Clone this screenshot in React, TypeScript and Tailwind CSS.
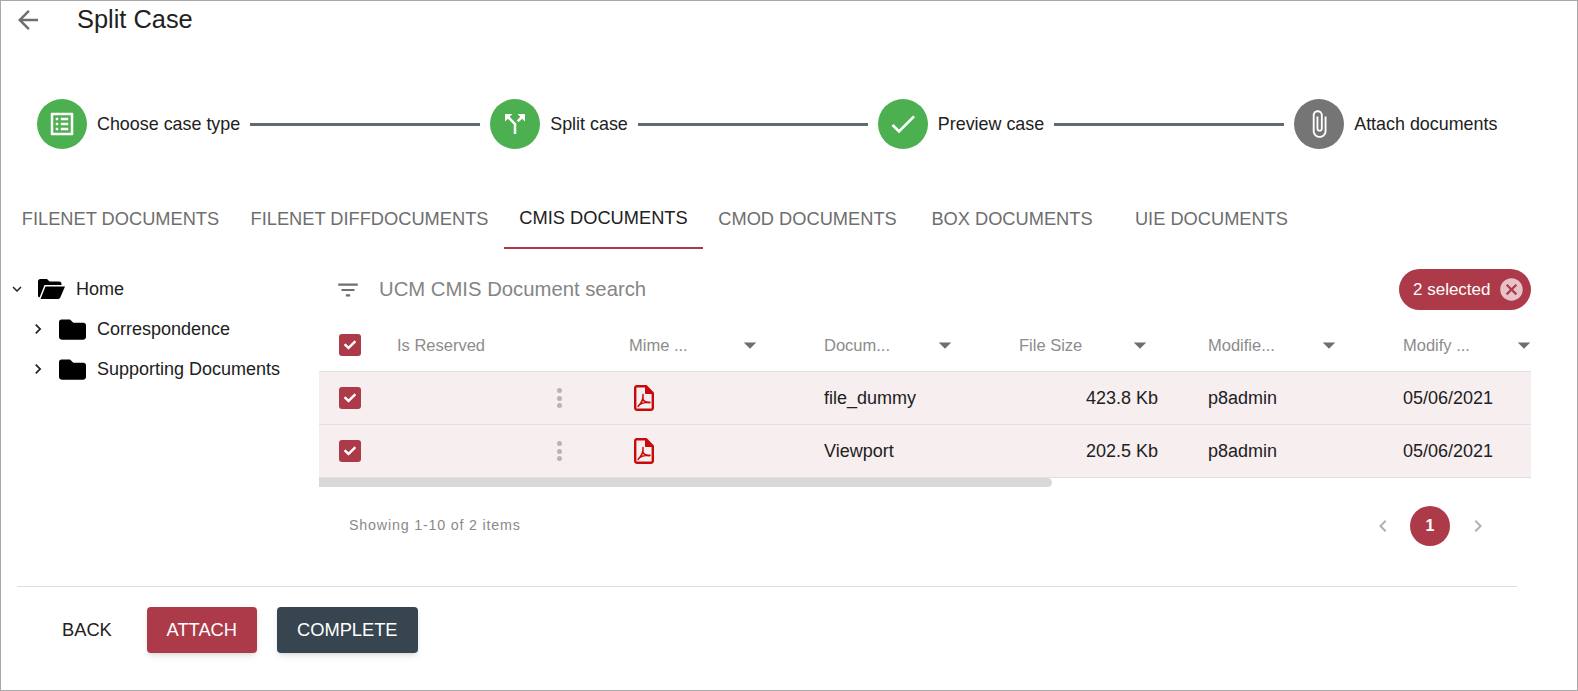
import React from 'react';
import { MdArrowBack, MdOutlineListAlt, MdCallSplit, MdCheck, MdAttachFile, MdFilterList, MdCancel, MdExpandMore, MdChevronRight, MdChevronLeft, MdArrowDropDown } from 'react-icons/md';
import { FaFolder, FaCheck } from 'react-icons/fa';

const steps = [
  { label: 'Choose case type', icon: <MdOutlineListAlt className="w-[30px] h-[30px]" />, color: 'bg-[#4caf50]' },
  { label: 'Split case', icon: <MdCallSplit className="w-[30px] h-[30px]" />, color: 'bg-[#4caf50]' },
  { label: 'Preview case', icon: <MdCheck className="w-[32px] h-[32px]" />, color: 'bg-[#4caf50]' },
  { label: 'Attach documents', icon: <MdAttachFile className="w-[30px] h-[30px]" />, color: 'bg-[#757575]' },
];

const tabs = [
  { label: 'FILENET DOCUMENTS', cls: 'w-[229px]' },
  { label: 'FILENET DIFFDOCUMENTS', cls: 'w-[269px]' },
  { label: 'CMIS DOCUMENTS', cls: 'w-[199px] text-[#212121] border-b-2 border-[#ad3a48]' },
  { label: 'CMOD DOCUMENTS', cls: 'w-[209px]' },
  { label: 'BOX DOCUMENTS', cls: 'w-[200px]' },
  { label: 'UIE DOCUMENTS', cls: 'w-[199px]' },
];

const columns = [
  { label: 'Mime ...', cls: 'w-[195px]' },
  { label: 'Docum...', cls: 'w-[195px]' },
  { label: 'File Size', cls: 'w-[189px]' },
  { label: 'Modifie...', cls: 'w-[195px]' },
  { label: 'Modify ...', cls: 'w-[128px]' },
];

const rows = [
  { name: 'file_dummy', size: '423.8 Kb' },
  { name: 'Viewport', size: '202.5 Kb' },
];

function Check() {
  return (
    <span className="w-[22px] h-[22px] rounded-[3px] bg-[#ad3a48] flex items-center justify-center text-white shrink-0">
      <FaCheck className="w-[12px] h-[12px]" />
    </span>
  );
}

function PdfIcon() {
  return (
    <svg viewBox="0 0 20 26" className="ml-[65px] w-[20px] h-[26px] shrink-0" fill="none" stroke="#c80a0a">
      <path d="M2.5 1.2H12L18.8 8V23a1.8 1.8 0 0 1-1.8 1.8H3A1.8 1.8 0 0 1 1.2 23V3A1.8 1.8 0 0 1 2.5 1.2Z" strokeWidth="2.4" strokeLinejoin="round" />
      <path d="M11.5 1.5V8.5H18.5L11.5 1.5Z" fill="#c80a0a" strokeWidth="1" />
      <path d="M9 9.5C9.5 13 7.5 18 4 21.5M9 14.5C10.5 17 13 17.8 16 17.6M4.5 20.5C7 18 11.5 17 16 17.2" strokeWidth="1.5" strokeLinecap="round" />
    </svg>
  );
}

export default function App() {
  return (
    <div className="h-[691px] w-[1578px] border border-[#a9a9a9] bg-white overflow-hidden font-['Liberation_Sans',sans-serif] text-[#212121] text-[18px]">
      {/* title */}
      <div className="flex items-center h-[38px] pl-[12px]">
        <MdArrowBack className="w-[30px] h-[30px] text-[#6f6f6f]" />
        <h1 className="ml-[34px] text-[25.4px] leading-none">Split Case</h1>
      </div>

      {/* stepper */}
      <div className="flex items-center mt-[60px] pl-[36px] text-[17.9px]">
        {steps.map((s, i) => (
          <React.Fragment key={s.label}>
            <span className={`w-[50px] h-[50px] rounded-full ${s.color} text-white flex items-center justify-center shrink-0`}>{s.icon}</span>
            <span className="ml-[10px] whitespace-nowrap">{s.label}</span>
            {i < steps.length - 1 && <span className="w-[230px] h-[3px] mx-[10px] bg-[#5f6b70]" />}
          </React.Fragment>
        ))}
      </div>

      {/* tabs */}
      <div className="flex mt-[50px] pl-[5px] h-[50px]">
        {tabs.map(t => (
          <div key={t.label} className={`${t.cls} flex items-center justify-center pb-[10px] text-[#6e6e6e] text-[18.25px] whitespace-nowrap`}>{t.label}</div>
        ))}
      </div>

      <div className="flex mt-[20px]">
        {/* tree */}
        <div className="w-[318px] shrink-0">
          <div className="flex items-center h-[40px]">
            <MdExpandMore className="ml-[7px] w-[18px] h-[18px]" />
            <svg viewBox="0 0 27 20" className="ml-[12px] w-[27px] h-[20px] shrink-0" fill="#000">
              <path d="M0 2.5A2.5 2.5 0 0 1 2.5 0H9l2.5 2.5H21A2.5 2.5 0 0 1 23.5 5V6H6.5L1.5 18.5 0 17.5Z" />
              <path d="M7.5 7.5H27L22.5 18a3 3 0 0 1-2.5 2H2.5Z" />
            </svg>
            <span className="ml-[11px]">Home</span>
          </div>
          <div className="flex items-center h-[40px]">
            <MdChevronRight className="ml-[27px] w-[20px] h-[20px]" />
            <FaFolder className="ml-[11px] w-[27px] h-[27px] text-black" />
            <span className="ml-[11px]">Correspondence</span>
          </div>
          <div className="flex items-center h-[40px]">
            <MdChevronRight className="ml-[27px] w-[20px] h-[20px]" />
            <FaFolder className="ml-[11px] w-[27px] h-[27px] text-black" />
            <span className="ml-[11px] whitespace-nowrap">Supporting Documents</span>
          </div>
        </div>

        {/* grid */}
        <div className="w-[1212px] shrink-0">
          <div className="flex items-center h-[41px]">
            <MdFilterList className="ml-[16px] w-[26px] h-[26px] text-[#6f6f6f]" />
            <span className="ml-[18px] text-[#858585] text-[20.3px]">UCM CMIS Document search</span>
            <span className="ml-auto h-[41px] w-[132px] rounded-full bg-[#ad3a48] text-white text-[17px] flex items-center pl-[14px] pr-[6px] justify-between">
              2 selected
              <MdCancel className="w-[27px] h-[27px] text-[#e6c3c8]" />
            </span>
          </div>

          <div className="flex items-center h-[53px] mt-[9px] border-b border-[#e0e0e0] text-[#8c8c8c] text-[16.5px]">
            <span className="ml-[20px]"><Check /></span>
            <span className="ml-[36px] w-[232px] shrink-0">Is Reserved</span>
            {columns.map(c => (
              <div key={c.label} className={`${c.cls} flex items-center shrink-0`}>
                <span className="w-[106px] shrink-0 whitespace-nowrap">{c.label}</span>
                <MdArrowDropDown className="w-[30px] h-[30px] shrink-0 text-[#6f6f6f]" />
              </div>
            ))}
          </div>

          {rows.map(r => (
            <div key={r.name} className="flex items-center h-[53px] bg-[#f7eef0] border-b border-[#e0e0e0]">
              <span className="ml-[20px]"><Check /></span>
              <span className="ml-[188px] w-[20px] flex flex-col gap-[2.5px] items-center">
                <span className="w-[5px] h-[5px] rounded-full bg-[#b9b4b5]" />
                <span className="w-[5px] h-[5px] rounded-full bg-[#b9b4b5]" />
                <span className="w-[5px] h-[5px] rounded-full bg-[#b9b4b5]" />
              </span>
              <PdfIcon />
              <span className="ml-[170px] w-[262px]">{r.name}</span>
              <span className="w-[122px]">{r.size}</span>
              <span className="w-[195px]">p8admin</span>
              <span>05/06/2021</span>
            </div>
          ))}
          <div className="w-[733px] h-[9px] bg-[#d8d8d8] rounded-r-full" />

          {/* pagination */}
          <div className="flex items-center h-[41px] mt-[18px]">
            <span className="ml-[30px] text-[14.3px] tracking-[0.8px] text-[#8a8a8a]">Showing 1-10 of 2 items</span>
            <MdChevronLeft className="ml-auto w-[24px] h-[24px] text-[#b0b0b0]" />
            <span className="ml-[15px] w-[40px] h-[40px] rounded-full bg-[#ad3a48] text-white font-bold text-[16px] flex items-center justify-center">1</span>
            <MdChevronRight className="ml-[16px] mr-[41px] w-[24px] h-[24px] text-[#b0b0b0]" />
          </div>
        </div>
      </div>

      {/* footer */}
      <div className="mx-[16px] w-[1500px] mt-[40px] border-t border-[#dedede]" />
      <div className="flex items-center mt-[20px] pl-[61px] text-[18.3px]">
        <span>BACK</span>
        <button className="ml-[35px] w-[110px] h-[46px] rounded bg-[#ad3a48] text-white shadow-md">ATTACH</button>
        <button className="ml-[20px] w-[141px] h-[46px] rounded bg-[#36454f] text-white shadow-md">COMPLETE</button>
      </div>
    </div>
  );
}
